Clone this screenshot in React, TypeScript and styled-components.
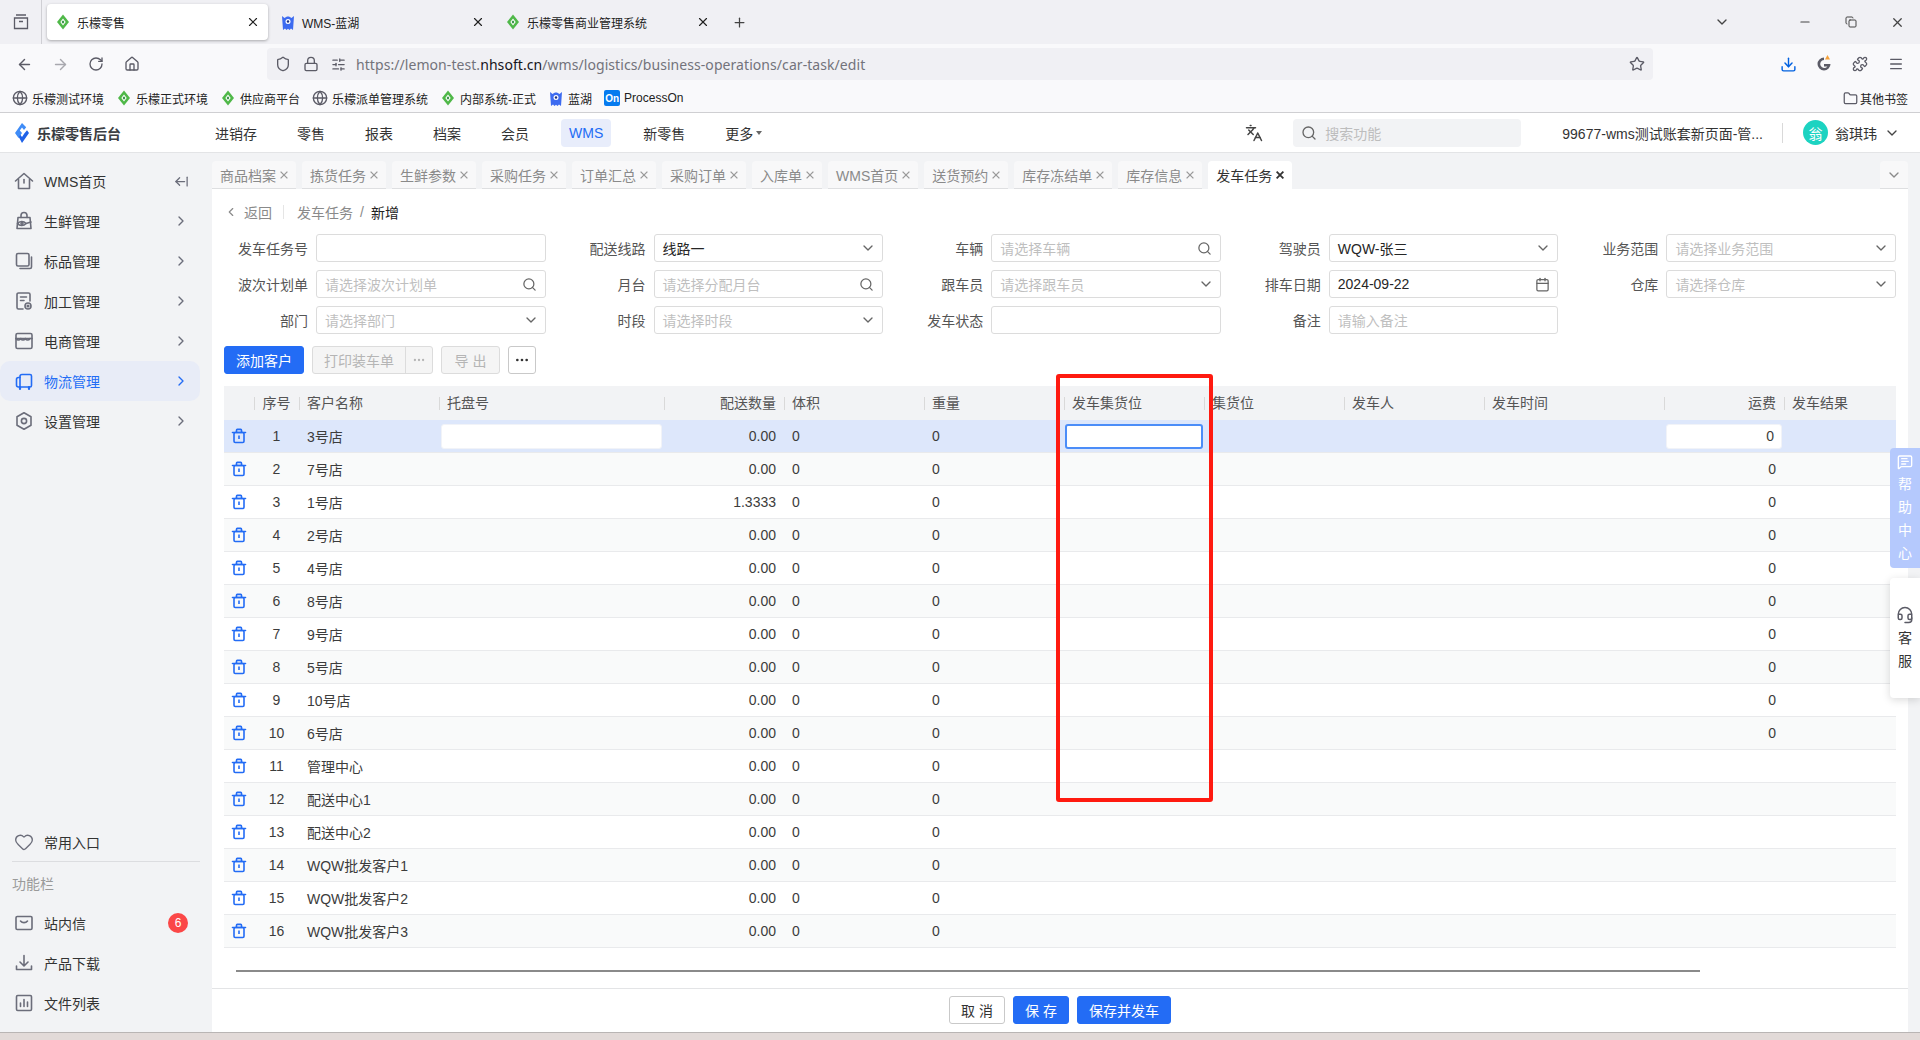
import React from "react";
import styled, { createGlobalStyle } from "styled-components";
import {
  ArrowLeft,
  ArrowLeftFromLine,
  ArrowRight,
  Calendar,
  ChevronDown,
  ChevronLeft,
  ChevronRight,
  Copy,
  Download,
  Ellipsis,
  Folder,
  Globe,
  Headset,
  Heart,
  House,
  Languages,
  Lock,
  Menu,
  MessageSquareText,
  Minus,
  Plus,
  Puzzle,
  RotateCw,
  Search,
  Shield,
  SlidersHorizontal,
  Star,
  X,
} from "lucide-react";

const FONT = `"Liberation Sans", "Noto Sans CJK SC", sans-serif`;
const BLUE = "#236cf5";

const GlobalStyle = createGlobalStyle`
  html, body {
    margin: 0;
    padding: 0;
    background: #f2f3f5;
    overflow: hidden;
  }
  * { box-sizing: border-box; }
`;

const Page = styled.div`
  position: relative;
  width: 1920px;
  height: 1040px;
  display: flex;
  flex-direction: column;
  font-family: ${FONT};
  font-size: 14px;
  color: #333;
  overflow: hidden;
`;

/* browser chrome */
const TabStrip = styled.div`
  height: 44px;
  background: #f0f0f4;
  display: flex;
  align-items: center;
  flex: none;
`;

const PanelButton = styled.div`
  width: 42px;
  height: 44px;
  display: flex;
  align-items: center;
  justify-content: center;
  border-right: 1px solid #cfcfd4;
  color: #5b5b66;
  margin-right: 5px;
`;

const BrowserTab = styled.div<{ $active?: boolean }>`
  width: 221px;
  height: 36px;
  margin-right: 4px;
  padding: 0 8px;
  display: flex;
  align-items: center;
  gap: 6px;
  font-size: 12px;
  color: #222;
  border-radius: 4px;
  background: ${(p) => (p.$active ? "#fff" : "transparent")};
  box-shadow: ${(p) => (p.$active ? "0 1px 3px rgba(0,0,0,.3)" : "none")};
`;

const TabTitle = styled.span`
  flex: 1;
  white-space: nowrap;
`;

const StripIcon = styled.div<{ $w?: number }>`
  width: ${(p) => p.$w ?? 46}px;
  height: 44px;
  display: flex;
  align-items: center;
  justify-content: center;
  color: #444;
`;

const StripSpacer = styled.div`
  flex: 1;
`;

const Toolbar = styled.div`
  height: 40px;
  padding: 4px 6px;
  background: #f9f9fb;
  display: flex;
  align-items: center;
  flex: none;
`;

const ToolButton = styled.div<{ $dim?: boolean; $blue?: boolean }>`
  width: 36px;
  height: 32px;
  display: flex;
  align-items: center;
  justify-content: center;
  color: ${(p) => (p.$blue ? "#0061e0" : p.$dim ? "#a8a8ae" : "#5b5b66")};
`;

const AddressBar = styled.div`
  width: 1386px;
  height: 32px;
  margin: 0 117px;
  padding: 0 8px;
  background: #f0f0f4;
  border-radius: 4px;
  display: flex;
  align-items: center;
  color: #5b5b66;
`;

const AddressIcons = styled.div`
  display: flex;
  align-items: center;
  gap: 12px;
  margin-right: 10px;
`;

const UrlText = styled.div`
  flex: 1;
  font-family: "Noto Sans", "Noto Sans CJK SC", sans-serif;
  font-size: 14px;
  letter-spacing: 0.065px;
  color: #73737b;
  white-space: nowrap;
  b {
    font-weight: 400;
    color: #15141a;
  }
`;

const Bookmarks = styled.div`
  height: 29px;
  padding: 0 12px;
  background: #f9f9fb;
  display: flex;
  align-items: center;
  gap: 12px;
  font-size: 12px;
  color: #222;
  border-bottom: 1px solid #cfcfd2;
  flex: none;
`;

const Bookmark = styled.div`
  display: flex;
  align-items: center;
  gap: 4px;
  white-space: nowrap;
`;

const OtherMarks = styled(Bookmark)`
  margin-left: auto;
  gap: 2px;
`;

const OnBadge = styled.span`
  width: 16px;
  height: 16px;
  background: #067bef;
  color: #fff;
  font-size: 10px;
  font-weight: 700;
  border-radius: 2px;
  display: flex;
  align-items: center;
  justify-content: center;
`;

/* app header */
const AppHeader = styled.header`
  height: 40px;
  background: #fff;
  border-bottom: 1px solid #e3e4e6;
  display: flex;
  align-items: center;
  padding-right: 20px;
  flex: none;
`;

const Brand = styled.div`
  width: 207px;
  padding-left: 15px;
  display: flex;
  align-items: center;
  gap: 8px;
  font-size: 14px;
  font-weight: 700;
  color: #3a3d42;
`;

const TopNav = styled.nav`
  display: flex;
  align-items: center;
  gap: 24px;
`;

const TopNavItem = styled.div<{ $active?: boolean }>`
  height: 28px;
  padding: 0 8px;
  display: flex;
  align-items: center;
  gap: 3px;
  border-radius: 4px;
  color: ${(p) => (p.$active ? BLUE : "#333")};
  background: ${(p) => (p.$active ? "#e8edfb" : "transparent")};
`;

const Caret = styled.span`
  width: 0;
  height: 0;
  border-left: 3px solid transparent;
  border-right: 3px solid transparent;
  border-top: 4px solid #666;
`;

const HeaderRight = styled.div`
  margin-left: auto;
  display: flex;
  align-items: center;
`;

const SearchBox = styled.div`
  width: 228px;
  height: 28px;
  margin: 0 41px 0 30px;
  padding: 0 8px;
  display: flex;
  align-items: center;
  gap: 8px;
  background: #f2f3f5;
  border-radius: 4px;
  color: #bdbdbd;
`;

const AccountName = styled.div`
  white-space: nowrap;
  color: #333;
`;

const HeaderDivider = styled.div`
  width: 1px;
  height: 20px;
  margin: 0 20px 0 19px;
  background: #d9d9d9;
`;

const Avatar = styled.div`
  width: 25px;
  height: 25px;
  border-radius: 50%;
  margin-right: 7px;
  background: #1cd3c1;
  color: #fff;
  font-size: 14px;
  display: flex;
  align-items: center;
  justify-content: center;
`;

const UserName = styled.div`
  margin-right: 7px;
`;

/* layout */
const Body = styled.div`
  flex: 1;
  min-height: 0;
  display: flex;
  background: #f2f3f5;
`;

const Wallpaper = styled.div`
  height: 8px;
  flex: none;
  background: #e2dad8;
  border-top: 1px solid #b9b5b4;
`;

const Sidebar = styled.aside`
  width: 212px;
  flex: none;
  display: flex;
  flex-direction: column;
  justify-content: space-between;
`;

const SideGroup = styled.div<{ $top?: boolean }>`
  padding: ${(p) => (p.$top ? "8px 12px 0 0" : "0 12px 9px 0")};
`;

const SideItem = styled.div<{ $active?: boolean; $h?: number }>`
  height: ${(p) => p.$h ?? 40}px;
  display: flex;
  align-items: center;
  padding: 0 11px 0 14px;
  gap: 10px;
  border-radius: 10px;
  background: ${(p) => (p.$active ? "#e8ecf7" : "transparent")};
  color: ${(p) => (p.$active ? BLUE : "#333")};
  svg.side-icon {
    color: ${(p) => (p.$active ? BLUE : "#6b6d7a")};
    flex: none;
  }
`;

const SideLabel = styled.span`
  flex: 1;
  white-space: nowrap;
`;

const SideChevron = styled(ChevronRight)<{ $active?: boolean }>`
  color: ${(p) => (p.$active ? BLUE : "#6b6d7a")};
`;

const SideDivider = styled.div`
  height: 1px;
  margin-left: 12px;
  background: #dcdde0;
`;

const SideCaption = styled.div`
  height: 41px;
  padding-left: 12px;
  display: flex;
  align-items: center;
  color: #9a9a9a;
`;

const Badge = styled.span`
  width: 20px;
  height: 20px;
  margin-right: 1px;
  border-radius: 50%;
  background: #fb4747;
  color: #fff;
  font-size: 12px;
  display: flex;
  align-items: center;
  justify-content: center;
`;

const Main = styled.main`
  flex: 1;
  min-width: 0;
  margin-right: 12px;
  display: flex;
  flex-direction: column;
`;

const PageTabs = styled.div`
  height: 36px;
  flex: none;
  padding-top: 8px;
  display: flex;
  gap: 6px;
`;

const PageTab = styled.div<{ $active?: boolean }>`
  height: 28px;
  padding: 0 8px;
  display: flex;
  align-items: center;
  gap: 4px;
  border-radius: 4px 4px 0 0;
  white-space: nowrap;
  color: ${(p) => (p.$active ? "#333" : "#8a8a8a")};
  background: ${(p) => (p.$active ? "#fff" : "#f8f8f9")};
  border-bottom: 1px solid ${(p) => (p.$active ? "#fff" : "#dedfe1")};
`;

const TabClose = styled.svg<{ $active?: boolean }>`
  width: 8px;
  height: 8px;
  fill: none;
  stroke: ${(p) => (p.$active ? "#333" : "#9a9a9a")};
  stroke-width: ${(p) => (p.$active ? 1.8 : 1.3)};
`;

const TabCollapse = styled.div`
  margin-left: auto;
  width: 28px;
  height: 28px;
  display: flex;
  align-items: center;
  justify-content: center;
  color: #8a8a8a;
  border-radius: 4px 4px 0 0;
  background: #f8f8f9;
  border-bottom: 1px solid #dedfe1;
`;

const Content = styled.section`
  flex: 1;
  min-height: 0;
  background: #fff;
  display: flex;
  flex-direction: column;
`;

const Scroller = styled.div`
  flex: 1;
  min-height: 0;
  padding: 0 12px;
`;

const Crumbs = styled.div`
  height: 45px;
  display: flex;
  align-items: center;
  color: #8a8a8a;
`;

const BackLink = styled.div`
  display: flex;
  align-items: center;
  gap: 6px;
  padding-right: 12px;
  margin-right: 13px;
  position: relative;
  &::after {
    content: "";
    position: absolute;
    right: 0;
    top: 3px;
    bottom: 3px;
    width: 1px;
    background: #e5e5e5;
  }
`;

const CrumbSep = styled.span`
  margin: 0 7px;
`;

const CrumbNow = styled.span`
  color: #222;
`;

const FormGrid = styled.div`
  display: grid;
  grid-template-columns: repeat(5, 321.6px);
  column-gap: 16px;
  row-gap: 8px;
`;

const FormItem = styled.div`
  display: grid;
  grid-template-columns: 84px 229.6px;
  column-gap: 8px;
  align-items: center;
`;

const FormLabel = styled.label`
  text-align: right;
  color: #555;
  white-space: nowrap;
`;

const Field = styled.div<{ $muted?: boolean }>`
  height: 28px;
  padding: 0 8px;
  display: flex;
  align-items: center;
  justify-content: space-between;
  background: #fff;
  border: 1px solid #dcdcdc;
  border-radius: 3px;
  white-space: nowrap;
  color: ${(p) => (p.$muted ? "#bfbfbf" : "#262626")};
  svg {
    color: #666;
    flex: none;
  }
`;

const FieldChevron = styled(ChevronDown)`
  margin-right: -2px;
`;

const FieldCalendar = styled(Calendar)`
  margin-right: -1px;
`;

const Actions = styled.div`
  margin-top: 12px;
  display: flex;
  gap: 8px;
`;

const Button = styled.button<{ $w: number; $variant?: "primary" | "disabled" | "plain" }>`
  width: ${(p) => p.$w}px;
  height: 28px;
  padding: 0;
  font-family: ${FONT};
  font-size: 14px;
  border-radius: 3px;
  display: flex;
  align-items: center;
  justify-content: center;
  border: 1px solid
    ${(p) =>
      p.$variant === "primary"
        ? BLUE
        : p.$variant === "disabled"
          ? "#dcdcdc"
          : "#c9c9c9"};
  background: ${(p) =>
    p.$variant === "primary"
      ? BLUE
      : p.$variant === "disabled"
        ? "#f5f5f5"
        : "#fff"};
  color: ${(p) =>
    p.$variant === "primary"
      ? "#fff"
      : p.$variant === "disabled"
        ? "#b5b5b5"
        : "#333"};
`;

const SplitButton = styled.div`
  width: 121px;
  height: 28px;
  display: flex;
  align-items: center;
  background: #f5f5f5;
  border: 1px solid #dcdcdc;
  border-radius: 3px;
  color: #b5b5b5;
`;

const SplitMain = styled.div`
  width: 93px;
  height: 100%;
  display: flex;
  align-items: center;
  justify-content: center;
  border-right: 1px solid #dcdcdc;
`;

const SplitMore = styled.div`
  flex: 1;
  display: flex;
  align-items: center;
  justify-content: center;
`;

const TableWrap = styled.div`
  position: relative;
  margin-top: 12px;
`;

const COLUMNS = "30px 45px 140px 225px 120px 140px 140px 140px 140px 140px 180px 120px 112px";

const HeadRow = styled.div`
  height: 34px;
  display: grid;
  grid-template-columns: ${COLUMNS};
  background: #f2f3f5;
`;

const HeadCell = styled.div<{ $align?: string }>`
  position: relative;
  padding: 0 8px 2px;
  display: flex;
  align-items: center;
  justify-content: ${(p) => p.$align ?? "flex-start"};
  color: #555;
  white-space: nowrap;
  &:not(:first-child)::before {
    content: "";
    position: absolute;
    left: 0;
    top: 11px;
    height: 13px;
    width: 1px;
    background: #d9d9d9;
  }
`;

const DataRow = styled.div<{ $selected?: boolean; $odd?: boolean }>`
  height: 33px;
  display: grid;
  grid-template-columns: ${COLUMNS};
  border-bottom: 1px solid #e9eaec;
  background: ${(p) => (p.$selected ? "#dde7fb" : p.$odd ? "#f9fafa" : "#fff")};
`;

const Cell = styled.div<{ $align?: string; $pad?: number }>`
  padding: 0 ${(p) => p.$pad ?? 8}px;
  display: flex;
  align-items: center;
  justify-content: ${(p) => p.$align ?? "flex-start"};
  color: #3c3c3c;
  white-space: nowrap;
`;

const CellInput = styled.div<{ $focus?: boolean }>`
  width: 100%;
  height: 25px;
  padding: 0 7px;
  display: flex;
  align-items: center;
  justify-content: flex-end;
  background: #fff;
  border-radius: 3px;
  border: ${(p) => (p.$focus ? "2px solid #4b8df8" : "1px solid #f1f3f8")};
`;

const Highlight = styled.div`
  position: absolute;
  left: 832px;
  top: -12px;
  width: 157px;
  height: 428px;
  border: 4px solid #ff1a10;
  border-radius: 3px;
  pointer-events: none;
`;

const ScrollThumb = styled.div`
  width: 1464px;
  height: 2px;
  margin: 22px 0 0 12px;
  background: #8a8a8a;
`;

const FooterBar = styled.footer`
  height: 44px;
  flex: none;
  padding: 0 0 1px 737px;
  display: flex;
  align-items: center;
  gap: 8px;
  background: #fff;
  border-top: 1px solid #e3e4e6;
`;

const FloatTab = styled.div<{ $top: number; $help?: boolean }>`
  position: absolute;
  right: 0;
  top: ${(p) => p.$top}px;
  width: 30px;
  height: 120px;
  display: flex;
  flex-direction: column;
  align-items: center;
  justify-content: center;
  gap: 5px;
  line-height: 18px;
  border-radius: 4px 0 0 4px;
  font-size: 14px;
  background: ${(p) => (p.$help ? "#b5c9fd" : "#fff")};
  color: ${(p) => (p.$help ? "#fff" : "#333")};
  box-shadow: ${(p) => (p.$help ? "none" : "0 2px 8px rgba(0,0,0,.15)")};
`;

const Lemon = () => (
  <svg width="16" height="16" viewBox="0 0 16 16">
    <path d="M8 .5 14 8l-6 7.5L2 8z" fill="#4fb848" />
    <path d="M8 4.6 10.7 8 8 11.4 5.3 8z" fill="#fff" />
    <path d="M8 6.2 9.4 8 8 9.8 6.6 8z" fill="#2f8f3f" />
  </svg>
);

const Monster = () => (
  <svg width="16" height="17" viewBox="0 0 16 17">
    <path d="M3 16 2 2l2.500 2C5.500 3 6.700 2.400 8 2.400s2.500.6 3.500 1.600L14 2l-1 14-2-1.400L9.500 16 8 14.800 6.500 16 5 14.600z" fill="#3d6bf0" />
    <circle cx="8" cy="7.500" r="2.500" fill="#fff" />
    <circle cx="8" cy="7.500" r="1.200" fill="#1c2e80" />
  </svg>
);

const Logo = () => (
  <svg width="14" height="20" viewBox="0 0 14 20">
    <path d="M7 0 0 10l3.500 5L7 10 4.800 7.400 7 4.400 9 7l2.200-2.800z" fill="#3f8cf7" />
    <path d="M7 20l7-10-2-2.800L9.300 10.500 7 14 5.300 11.800 3.800 14z" fill="#1f62e8" />
  </svg>
);

const TrashIcon = () => (
  <svg width="16" height="16" viewBox="0 0 16 16" fill="none" stroke={BLUE} strokeWidth="1.600">
    <path d="M1.500 4.500h13" strokeLinecap="round" />
    <path d="M5.500 4.200V2.200c0-.5.300-.8.800-.8h3.400c.5 0 .8.300.8.800v2" />
    <rect x="3" y="4.500" width="10" height="10" rx="1.200" />
    <path d="M8 7.500v3.500" />
  </svg>
);

const SideSvg = ({ children }: { children: React.ReactNode }) => (
  <svg
    className="side-icon"
    width="20"
    height="20"
    viewBox="0 0 20 20"
    fill="none"
    stroke="currentColor"
    strokeWidth="1.600"
    strokeLinejoin="round"
    strokeLinecap="round"
  >
    {children}
  </svg>
);

const MENU_ICONS: Record<string, React.ReactNode> = {
  home: (
    <>
      <path d="M1.500 10 10 2.500 18.500 10" />
      <path d="M4.500 8.500V17.500h11V8.500" />
      <path d="M10 8.500v3.500" />
    </>
  ),
  fresh: (
    <>
      <path d="M4 6.500h12l1 11H3z" />
      <path d="M7 6.500V4.500a3 3 0 0 1 6 0v2" />
      <path d="M3.500 12.500c2-2.500 6-3 8.500 0-2.500 3-6.500 2.500-8.500 0z" />
      <circle cx="8" cy="12.500" r="1" />
      <path d="M12 12.500l5-1.500" />
    </>
  ),
  standard: (
    <>
      <rect x="2.500" y="2.500" width="12.500" height="12.500" rx="1.500" />
      <path d="M17.500 6v10a1.500 1.500 0 0 1-1.500 1.500H6" />
    </>
  ),
  process: (
    <>
      <path d="M9 18H4.500A1.500 1.500 0 0 1 3 16.500v-13A1.500 1.500 0 0 1 4.500 2h10A1.500 1.500 0 0 1 16 3.500V10" />
      <path d="M6.500 6h6M6.500 9.500H10" />
      <circle cx="14" cy="15" r="3" />
      <circle cx="14" cy="15" r=".8" />
    </>
  ),
  store: (
    <>
      <rect x="2" y="2.500" width="16" height="15" rx="1.500" />
      <path d="M2 7.500h16" />
      <path d="M2 7.500c1.300 2 3.400 2 4.700 0 1.300 2 3.300 2 4.600 0 1.300 2 3.400 2 4.700 0" />
    </>
  ),
  logistics: (
    <>
      <path d="M6 16V5.500A2 2 0 0 1 8 3.500h8A1.500 1.500 0 0 1 17.500 5v9.500A1.500 1.500 0 0 1 16 16H6z" />
      <path d="M6 6.500H4.500A2 2 0 0 0 2.500 8.500V14A2 2 0 0 0 4.500 16H6" />
      <path d="M6 16v2M15 16v2" strokeWidth="2.200" />
    </>
  ),
  setting: (
    <>
      <path d="M10 1.800 17 5.800v8.400l-7 4-7-4V5.800z" />
      <circle cx="10" cy="10" r="2.600" />
    </>
  ),
  mail: (
    <>
      <rect x="2" y="3.500" width="16" height="13" rx="1.200" />
      <path d="M6.500 8c1.800 2.200 5.200 2.200 7 0" />
    </>
  ),
  download: (
    <>
      <path d="M10 2.500v10M6 9l4 4 4-4" />
      <path d="M2.500 13v3.500h15V13" />
    </>
  ),
  files: (
    <>
      <rect x="2.500" y="2.500" width="15" height="15" rx="1.200" />
      <path d="M6.500 13.500V10M10 13.500V6.500M13.500 13.500V9" />
    </>
  ),
};

const topMenu = [
  { key: "home", label: "WMS首页" },
  { key: "fresh", label: "生鲜管理" },
  { key: "standard", label: "标品管理" },
  { key: "process", label: "加工管理" },
  { key: "store", label: "电商管理" },
  { key: "logistics", label: "物流管理", active: true },
  { key: "setting", label: "设置管理" },
];

const pageTabs = [
  "商品档案",
  "拣货任务",
  "生鲜参数",
  "采购任务",
  "订单汇总",
  "采购订单",
  "入库单",
  "WMS首页",
  "送货预约",
  "库存冻结单",
  "库存信息",
  "发车任务",
];

type Suffix = "search" | "down" | "date";
const formFields: { label: string; value?: string; hint?: string; suffix?: Suffix }[] = [
  { label: "发车任务号" },
  { label: "配送线路", value: "线路一", suffix: "down" },
  { label: "车辆", hint: "请选择车辆", suffix: "search" },
  { label: "驾驶员", value: "WQW-张三", suffix: "down" },
  { label: "业务范围", hint: "请选择业务范围", suffix: "down" },
  { label: "波次计划单", hint: "请选择波次计划单", suffix: "search" },
  { label: "月台", hint: "请选择分配月台", suffix: "search" },
  { label: "跟车员", hint: "请选择跟车员", suffix: "down" },
  { label: "排车日期", value: "2024-09-22", suffix: "date" },
  { label: "仓库", hint: "请选择仓库", suffix: "down" },
  { label: "部门", hint: "请选择部门", suffix: "down" },
  { label: "时段", hint: "请选择时段", suffix: "down" },
  { label: "发车状态" },
  { label: "备注", hint: "请输入备注" },
];

const heads: [string, string?][] = [
  [""],
  ["序号", "center"],
  ["客户名称"],
  ["托盘号"],
  ["配送数量", "flex-end"],
  ["体积"],
  ["重量"],
  ["发车集货位"],
  ["集货位"],
  ["发车人"],
  ["发车时间"],
  ["运费", "flex-end"],
  ["发车结果"],
];

const customers = [
  "3号店",
  "7号店",
  "1号店",
  "2号店",
  "4号店",
  "8号店",
  "9号店",
  "5号店",
  "10号店",
  "6号店",
  "管理中心",
  "配送中心1",
  "配送中心2",
  "WQW批发客户1",
  "WQW批发客户2",
  "WQW批发客户3",
];

function FieldSuffix({ kind }: { kind?: Suffix }) {
  if (kind === "search") return <Search size={15} />;
  if (kind === "down") return <FieldChevron size={16} />;
  if (kind === "date") return <FieldCalendar size={15} />;
  return null;
}

export default function App() {
  return (
    <Page>
      <GlobalStyle />
      <TabStrip>
        <PanelButton>
          <svg width="18" height="18" viewBox="0 0 18 18" fill="none" stroke="currentColor" strokeWidth="1.300">
            <path d="M4 2h10M2.500 5h13v10.500h-13zM7 8.500h4" />
          </svg>
        </PanelButton>
        <BrowserTab $active>
          <Lemon />
          <TabTitle>乐檬零售</TabTitle>
          <X size={14} />
        </BrowserTab>
        <BrowserTab>
          <Monster />
          <TabTitle>WMS-蓝湖</TabTitle>
          <X size={14} />
        </BrowserTab>
        <BrowserTab>
          <Lemon />
          <TabTitle>乐檬零售商业管理系统</TabTitle>
          <X size={14} />
        </BrowserTab>
        <StripIcon $w={34}>
          <Plus size={15} />
        </StripIcon>
        <StripSpacer />
        <StripIcon $w={32}>
          <ChevronDown size={16} />
        </StripIcon>
        <StripIcon $w={44} />
        <StripIcon>
          <Minus size={14} />
        </StripIcon>
        <StripIcon>
          <Copy size={12} />
        </StripIcon>
        <StripIcon>
          <X size={15} />
        </StripIcon>
      </TabStrip>

      <Toolbar>
        <ToolButton>
          <ArrowLeft size={17} />
        </ToolButton>
        <ToolButton $dim>
          <ArrowRight size={17} />
        </ToolButton>
        <ToolButton>
          <RotateCw size={16} />
        </ToolButton>
        <ToolButton>
          <House size={16} />
        </ToolButton>
        <AddressBar>
          <AddressIcons>
            <Shield size={16} />
            <Lock size={16} />
            <SlidersHorizontal size={15} />
          </AddressIcons>
          <UrlText>
            https://lemon-test.<b>nhsoft.cn</b>/wms/logistics/business-operations/car-task/edit
          </UrlText>
          <Star size={16} />
        </AddressBar>
        <ToolButton $blue>
          <Download size={17} />
        </ToolButton>
        <ToolButton>
          <svg width="18" height="18" viewBox="0 0 18 18">
            <path d="M9 2.500a6.500 6.500 0 1 0 6.500 6.500H9v2.400h3.400A4 4 0 1 1 9 5z" fill="#5b5b66" />
            <path d="M12.500 0l2.500 4.500h-5z" fill="#f5a23c" />
          </svg>
        </ToolButton>
        <ToolButton>
          <Puzzle size={16} />
        </ToolButton>
        <ToolButton>
          <Menu size={16} />
        </ToolButton>
      </Toolbar>

      <Bookmarks>
        <Bookmark>
          <Globe size={16} color="#5b5b66" />
          乐檬测试环境
        </Bookmark>
        <Bookmark>
          <Lemon />
          乐檬正式环境
        </Bookmark>
        <Bookmark>
          <Lemon />
          供应商平台
        </Bookmark>
        <Bookmark>
          <Globe size={16} color="#5b5b66" />
          乐檬派单管理系统
        </Bookmark>
        <Bookmark>
          <Lemon />
          内部系统-正式
        </Bookmark>
        <Bookmark>
          <Monster />
          蓝湖
        </Bookmark>
        <Bookmark>
          <OnBadge>On</OnBadge>
          ProcessOn
        </Bookmark>
        <OtherMarks>
          <Folder size={15} color="#5b5b66" />
          其他书签
        </OtherMarks>
      </Bookmarks>

      <AppHeader>
        <Brand>
          <Logo />
          乐檬零售后台
        </Brand>
        <TopNav>
          <TopNavItem>进销存</TopNavItem>
          <TopNavItem>零售</TopNavItem>
          <TopNavItem>报表</TopNavItem>
          <TopNavItem>档案</TopNavItem>
          <TopNavItem>会员</TopNavItem>
          <TopNavItem $active>WMS</TopNavItem>
          <TopNavItem>新零售</TopNavItem>
          <TopNavItem>
            更多
            <Caret />
          </TopNavItem>
        </TopNav>
        <HeaderRight>
          <Languages size={18} color="#444" />
          <SearchBox>
            <Search size={16} color="#666" />
            搜索功能
          </SearchBox>
          <AccountName>99677-wms测试账套新页面-管...</AccountName>
          <HeaderDivider />
          <Avatar>翁</Avatar>
          <UserName>翁琪玮</UserName>
          <ChevronDown size={16} color="#444" />
        </HeaderRight>
      </AppHeader>

      <Body>
        <Sidebar>
          <SideGroup $top>
            {topMenu.map((m, i) => (
              <SideItem key={m.key} $active={m.active}>
                <SideSvg>{MENU_ICONS[m.key]}</SideSvg>
                <SideLabel>{m.label}</SideLabel>
                {i === 0 ? (
                  <ArrowLeftFromLine size={15} color="#6b6d7a" />
                ) : (
                  <SideChevron size={16} $active={m.active} />
                )}
              </SideItem>
            ))}
          </SideGroup>
          <SideGroup>
            <SideItem $h={39}>
              <Heart className="side-icon" size={20} strokeWidth={1.6} />
              <SideLabel>常用入口</SideLabel>
            </SideItem>
            <SideDivider />
            <SideCaption>功能栏</SideCaption>
            <SideItem>
              <SideSvg>{MENU_ICONS.mail}</SideSvg>
              <SideLabel>站内信</SideLabel>
              <Badge>6</Badge>
            </SideItem>
            <SideItem>
              <SideSvg>{MENU_ICONS.download}</SideSvg>
              <SideLabel>产品下载</SideLabel>
            </SideItem>
            <SideItem>
              <SideSvg>{MENU_ICONS.files}</SideSvg>
              <SideLabel>文件列表</SideLabel>
            </SideItem>
          </SideGroup>
        </Sidebar>

        <Main>
          <PageTabs>
            {pageTabs.map((t, i) => {
              const active = i === pageTabs.length - 1;
              return (
                <PageTab key={t} $active={active}>
                  {t}
                  <TabClose $active={active} viewBox="0 0 8 8">
                    <path d="M.6.600l6.800 6.800M7.400.600.6 7.400" />
                  </TabClose>
                </PageTab>
              );
            })}
            <TabCollapse>
              <ChevronDown size={16} />
            </TabCollapse>
          </PageTabs>

          <Content>
            <Scroller>
              <Crumbs>
                <BackLink>
                  <ChevronLeft size={14} />
                  返回
                </BackLink>
                发车任务
                <CrumbSep>/</CrumbSep>
                <CrumbNow>新增</CrumbNow>
              </Crumbs>

              <FormGrid>
                {formFields.map((f) => (
                  <FormItem key={f.label}>
                    <FormLabel>{f.label}</FormLabel>
                    <Field $muted={!f.value}>
                      <span>{f.value ?? f.hint}</span>
                      <FieldSuffix kind={f.suffix} />
                    </Field>
                  </FormItem>
                ))}
              </FormGrid>

              <Actions>
                <Button $w={80} $variant="primary">
                  添加客户
                </Button>
                <SplitButton>
                  <SplitMain>打印装车单</SplitMain>
                  <SplitMore>
                    <Ellipsis size={14} />
                  </SplitMore>
                </SplitButton>
                <Button $w={59} $variant="disabled">
                  导 出
                </Button>
                <Button $w={28}>
                  <Ellipsis size={16} />
                </Button>
              </Actions>

              <TableWrap>
                <HeadRow>
                  {heads.map(([h, align], i) => (
                    <HeadCell key={i} $align={align}>
                      {h}
                    </HeadCell>
                  ))}
                </HeadRow>
                {customers.map((name, i) => {
                  const first = i === 0;
                  return (
                    <DataRow key={name} $selected={first} $odd={i % 2 === 1}>
                      <Cell $align="center" $pad={0}>
                        <TrashIcon />
                      </Cell>
                      <Cell $align="center">{i + 1}</Cell>
                      <Cell>{name}</Cell>
                      <Cell $pad={2}>{first && <CellInput />}</Cell>
                      <Cell $align="flex-end">{i === 2 ? "1.3333" : "0.00"}</Cell>
                      <Cell>0</Cell>
                      <Cell>0</Cell>
                      <Cell $pad={1}>{first && <CellInput $focus />}</Cell>
                      <Cell />
                      <Cell />
                      <Cell />
                      <Cell $align="flex-end" $pad={first ? 2 : 8}>
                        {first ? <CellInput>0</CellInput> : i < 10 ? "0" : ""}
                      </Cell>
                      <Cell />
                    </DataRow>
                  );
                })}
                <Highlight />
              </TableWrap>
              <ScrollThumb />
            </Scroller>

            <FooterBar>
              <Button $w={56}>取 消</Button>
              <Button $w={56} $variant="primary">
                保 存
              </Button>
              <Button $w={94} $variant="primary">
                保存并发车
              </Button>
            </FooterBar>
          </Content>
        </Main>
      </Body>
      <Wallpaper />

      <FloatTab $top={448} $help>
        <MessageSquareText size={16} />
        <span>帮</span>
        <span>助</span>
        <span>中</span>
        <span>心</span>
      </FloatTab>
      <FloatTab $top={578}>
        <Headset size={18} color="#5b5b66" />
        <span>客</span>
        <span>服</span>
      </FloatTab>
    </Page>
  );
}
